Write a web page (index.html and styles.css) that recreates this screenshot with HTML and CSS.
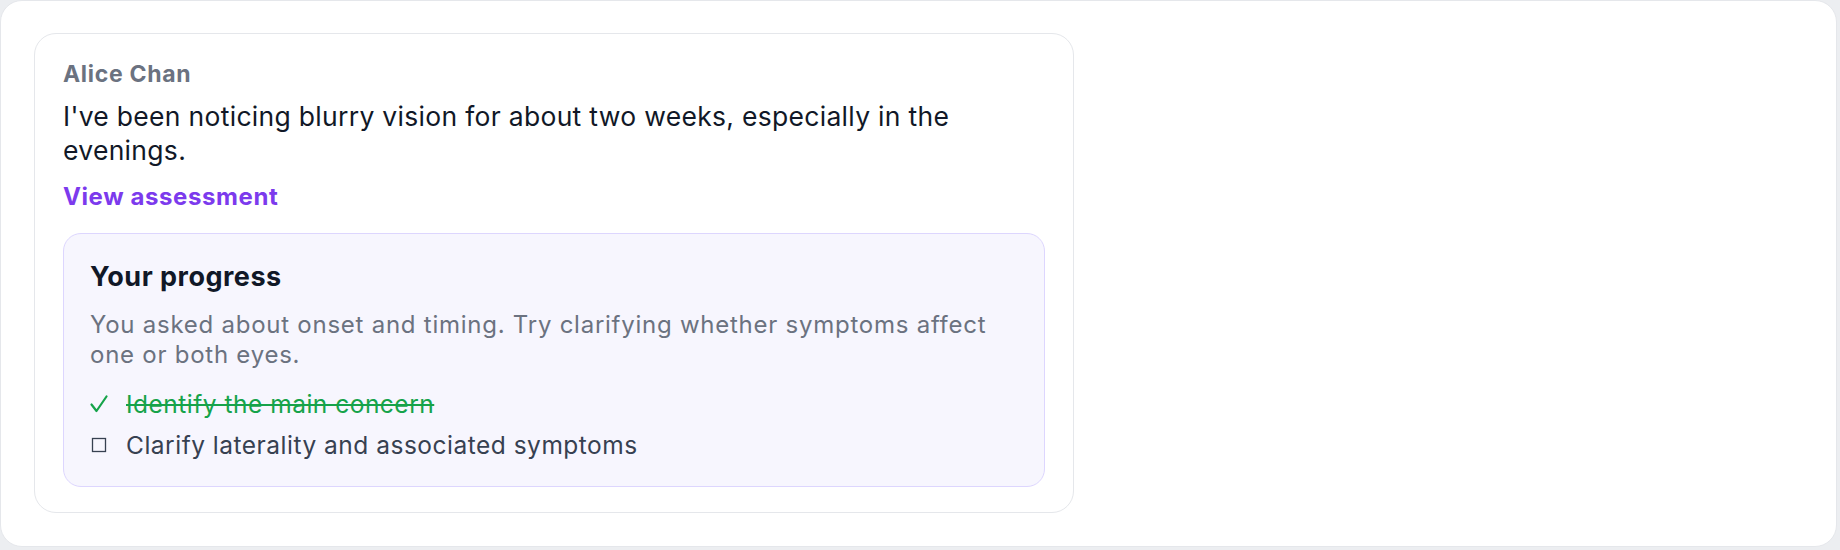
FILE: index.html
```html
<!DOCTYPE html>
<html lang="en">
<head>
<meta charset="utf-8">
<title>Progress</title>
<link rel="stylesheet" href="styles.css">
</head>
<body>
<div class="frame">
  <div class="card">
    <div class="name">Alice Chan</div>
    <p class="message">I've been noticing blurry vision for about two weeks, especially in the evenings.</p>
    <a class="link" href="#">View assessment</a>
    <section class="progress">
      <h2 class="progress-title">Your progress</h2>
      <p class="progress-desc">You asked about onset and timing. Try clarifying whether symptoms affect one or both eyes.</p>
      <ul class="checklist">
        <li class="item done">
          <svg class="icon" viewBox="0 0 18 18" width="18" height="18"><path d="M1.5 9.5 L6.5 16 L16.5 1.5" fill="none" stroke="#16a34a" stroke-width="2.2" stroke-linecap="round" stroke-linejoin="round"/></svg>
          <span class="item-text">Identify the main concern</span>
        </li>
        <li class="item">
          <svg class="icon" viewBox="0 0 18 18" width="18" height="18"><rect x="2.5" y="2.5" width="13" height="13" fill="none" stroke="#374151" stroke-width="1.3"/></svg>
          <span class="item-text">Clarify laterality and associated symptoms</span>
        </li>
      </ul>
    </section>
  </div>
</div>
</body>
</html>
```

FILE: styles.css
```css
* { box-sizing: border-box; }
html, body {
  margin: 0;
  padding: 0;
  background: #eceef1;
}
body {
  font-family: Inter, "Noto Sans", sans-serif;
  color: #111827;
}
.frame {
  width: 1837px;
  background: #ffffff;
  border: 1px solid #e5e7eb;
  border-radius: 22px;
  padding: 32px 33px 33px;
}
.card {
  width: 1040px;
  border: 1px solid #e5e7eb;
  border-radius: 22px;
  padding: 25px 28px 25px;
  background: #ffffff;
}
.name {
  font-size: 23px;
  line-height: 30px;
  font-weight: 700;
  letter-spacing: 0.7px;
  color: #6b7280;
}
.message {
  margin: 10px 0 0;
  font-size: 26.5px;
  line-height: 34px;
  letter-spacing: 0.3px;
  color: #111827;
}
.link {
  display: block;
  margin-top: 14px;
  font-size: 24px;
  line-height: 32px;
  font-weight: 700;
  letter-spacing: 0.6px;
  color: #7c3aed;
  text-decoration: none;
}
.progress {
  margin-top: 20px;
  background: #f7f6fe;
  border: 1px solid #ddd6fe;
  border-radius: 18px;
  padding: 26px 26px 26px;
}
.progress-title {
  margin: 0;
  font-size: 27px;
  line-height: 34px;
  font-weight: 700;
  letter-spacing: 0.5px;
  color: #111827;
}
.progress-desc {
  margin: 16px 0 0;
  font-size: 24px;
  line-height: 30px;
  letter-spacing: 0.75px;
  color: #6b7280;
}
.checklist {
  list-style: none;
  margin: 19px 0 0;
  padding: 0;
  display: flex;
  flex-direction: column;
  gap: 11px;
}
.item {
  display: flex;
  align-items: center;
  gap: 18px;
  font-size: 24.5px;
  line-height: 30px;
  letter-spacing: 0.5px;
  color: #374151;
}
.icon { flex: none; }
.done .item-text {
  color: #16a34a;
  text-decoration: line-through;
}
```
